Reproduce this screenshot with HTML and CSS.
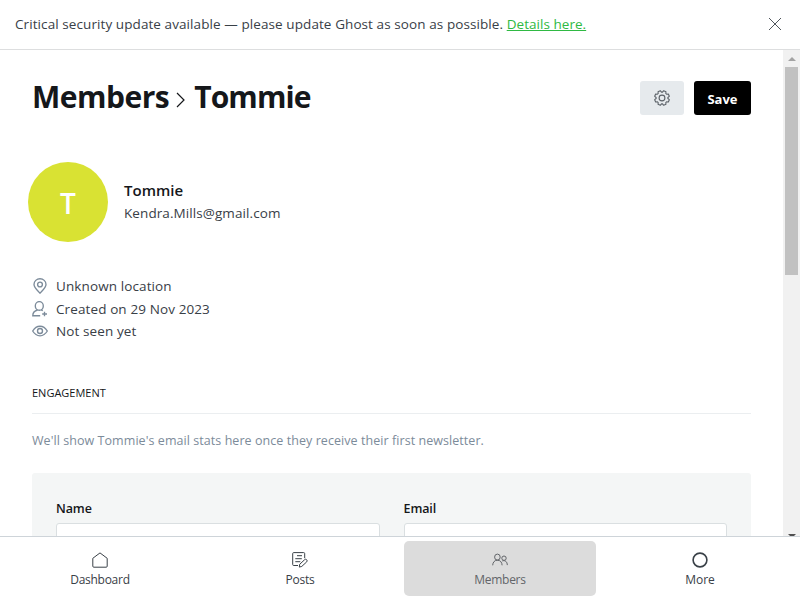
FILE: index.html
```html
<!DOCTYPE html>
<html lang="en">
<head>
<meta charset="utf-8">
<title>Members - Tommie</title>
<link rel="stylesheet" href="styles.css">
</head>
<body>
<div class="app">
  <aside class="banner">
    <p class="banner-text">Critical security update available — please update Ghost as soon as possible. <a href="#">Details here.</a></p>
    <svg class="close" viewBox="0 0 14 14"><path d="M1 1l12 12M13 1L1 13"/></svg>
  </aside>
  <div class="viewport">
    <main class="content">
      <header class="header">
        <h1 class="title"><span class="crumb">Members</span><svg class="chevron" viewBox="0 0 10 16"><path d="M1 1L8 8l-7 7"/></svg><span class="crumb-current">Tommie</span></h1>
        <div class="actions">
          <button class="btn btn-icon" aria-label="Settings">
            <svg class="gear" viewBox="-8 -8 16 16"><circle r="2.900"/><path d="M-.51-5.880L.51-5.880L1.690-7.310L3.970-6.360L3.790-4.520L4.520-3.790L6.360-3.970L7.310-1.690L5.880-.51L5.880.51L7.310 1.690L6.360 3.970L4.520 3.790L3.790 4.520L3.970 6.360L1.690 7.310L.51 5.880L-.51 5.880L-1.690 7.310L-3.970 6.360L-3.790 4.520L-4.520 3.790L-6.360 3.970L-7.310 1.690L-5.880.51L-5.880-.51L-7.310-1.690L-6.360-3.970L-4.520-3.790L-3.790-4.520L-3.970-6.360L-1.690-7.310z"/></svg>
          </button>
          <button class="btn btn-save">Save</button>
        </div>
      </header>
      <section class="profile">
        <div class="avatar">T</div>
        <div class="identity">
          <h3 class="name">Tommie</h3>
          <p class="email">Kendra.Mills@gmail.com</p>
        </div>
      </section>
      <ul class="details">
        <li><svg viewBox="0 0 16 16"><path d="M8 15.200C6.800 13.500 2 9.800 2 6.400a6 5.700 0 0 1 12 0C14 9.800 9.200 13.500 8 15.200z"/><circle cx="8" cy="6.500" r="2.400"/></svg><span class="location">Unknown location</span></li>
        <li><svg viewBox="0 0 16 16"><ellipse cx="7.300" cy="4.900" rx="4" ry="4.300"/><path d="M5.600 9C2.500 9.800.8 11.300.8 14.700h7.400M9.300 9l1.500.6M12.500 10.700v4.600M10.200 13h4.800"/></svg><span class="created">Created on 29 Nov 2023</span></li>
        <li><svg viewBox="0 0 16 16"><path d="M.7 8C2.300 5.300 5 3.200 8 3.200s5.700 2.100 7.300 4.800c-1.600 2.700-4.300 4.800-7.300 4.800S2.300 10.700.7 8z"/><circle cx="8" cy="8" r="2.500"/></svg><span class="seen">Not seen yet</span></li>
      </ul>
      <h4 class="section-title"><span>Engagement</span></h4>
      <p class="hint">We'll show Tommie's email stats here once they receive their first newsletter.</p>
      <form class="form">
        <label class="field"><span class="label-name">Name</span><input type="text"></label>
        <label class="field"><span class="label-email">Email</span><input type="text"></label>
      </form>
    </main>
    <div class="scrollbar">
      <svg class="arrow arrow-up" viewBox="0 0 8 4"><path d="M4 0l4 4H0z"/></svg>
      <div class="thumb"></div>
      <svg class="arrow arrow-down" viewBox="0 0 8 4"><path d="M0 0h8L4 4z"/></svg>
    </div>
  </div>
  <nav class="nav">
    <a class="tab"><svg viewBox="0 0 16 16"><path d="M.8 6.300L8 .9l7.200 5.400v7.900a1 1 0 0 1-1 1H1.800a1 1 0 0 1-1-1z"/></svg><span class="t-dash">Dashboard</span></a>
    <a class="tab"><svg viewBox="0 0 16 16"><path d="M6 13.500H1.700a1 1 0 0 1-1-1V1.600a1 1 0 0 1 1-1h10a1 1 0 0 1 1 1v4.600M5 3.700h5M3.300 6.700h6.500M3.300 9.700h5M7.700 12.300l4.800-4.500a1.500 1.500 0 0 1 2.200 2.100l-4.900 4.500-2.500.7z"/></svg><span class="t-posts">Posts</span></a>
    <a class="tab tab-active"><svg viewBox="0 0 16 16"><ellipse cx="5.400" cy="5.100" rx="2.800" ry="3"/><path d="M.7 13.300c.1-2.800 1.600-5.100 4.700-5.100s4.600 2.300 4.700 5.100M10.300 8.900c3.200-1 4.900 1.100 5 4.200"/><circle cx="12" cy="6.200" r="2.200"/></svg><span class="t-members">Members</span></a>
    <a class="tab tab-more"><svg viewBox="0 0 16 16"><circle cx="8" cy="8" r="6.900"/></svg><span class="t-more">More</span></a>
  </nav>
</div>
</body>
</html>
```
FILE: styles.css
```css
* { box-sizing: border-box; }

body {
  margin: 0;
  font-family: "Open Sans", "Noto Sans", sans-serif;
  color: #15171a;
  background: #fff;
}

h1, h3, h4, p, ul { margin: 0; padding: 0; }
svg { display: block; flex: none; fill: none; stroke: currentColor; }

.app {
  display: flex;
  flex-direction: column;
  width: 800px;
  height: 600px;
  overflow: hidden;
}

.banner {
  display: flex;
  flex: none;
  align-items: center;
  justify-content: space-between;
  height: 50px;
  padding: 0 18px 1px 15px;
  border-bottom: 1px solid #dddedf;
}
.banner-text { font-size: 13.500px; line-height: 20px; letter-spacing: 0.085px; color: #394047; white-space: nowrap; }
.banner-text a { color: #2fb943; letter-spacing: 0.04px; text-decoration: underline; }
.close { width: 14px; height: 14px; color: #50565c; }

.viewport { display: flex; flex: 1; min-height: 0; overflow: hidden; }
.content { width: 783px; padding: 31px 32px 0; }

.header { display: flex; justify-content: space-between; height: 34px; }
.title {
  display: flex;
  align-items: center;
  height: 30px;
  font-size: 30px;
  font-weight: 700;
  white-space: nowrap;
}
.crumb { letter-spacing: -0.500px; }
.crumb-current { letter-spacing: -0.900px; }
.chevron { width: 10px; height: 16px; margin: 7px 8px 0 7px; stroke-width: 1.200; }
.actions { display: flex; gap: 10px; }
.btn {
  display: flex;
  align-items: center;
  justify-content: center;
  height: 34px;
  padding: 0;
  border: 0;
  border-radius: 3px;
  font: 700 13px "Open Sans", sans-serif;
}
.btn-icon { width: 44px; color: #5c6268; background: #e6eaed; }
.btn-save { width: 57px; padding-top: 2px; color: #fff; background: #000; }
.gear { width: 16px; height: 16px; stroke-width: 1.100; stroke-linejoin: round; }

.profile { display: flex; align-items: center; gap: 16px; margin: 47px 0 0 -4px; }
.avatar {
  display: flex;
  align-items: center;
  justify-content: center;
  width: 80px;
  height: 80px;
  padding-top: 1px;
  border-radius: 50%;
  font-size: 28px;
  font-weight: 600;
  color: #fff;
  background: #d9e233;
}
.identity { padding-bottom: 2px; }
.name { font-size: 15px; font-weight: 600; line-height: 23px; }
.email { font-size: 13.500px; line-height: 22px; letter-spacing: 0.085px; color: #394047; }

.details { margin-top: 33px; list-style: none; font-size: 13.500px; letter-spacing: 0.110px; color: #394047; }
.details li { display: flex; align-items: center; gap: 8px; height: 22.500px; }
.details svg { width: 16px; height: 16px; color: #7c8b9a; stroke-width: 1.350; }

.section-title {
  height: 30px;
  margin-top: 41px;
  border-bottom: 1px solid #ebeef0;
  font-size: 11px;
  font-weight: 500;
  line-height: 18px;
  text-transform: uppercase;
}
.hint { margin-top: 17px; font-size: 12.500px; line-height: 20px; letter-spacing: 0.060px; color: #7c8b9a; }
.form {
  display: grid;
  grid-template-columns: 1fr 1fr;
  gap: 24px;
  height: 150px;
  margin-top: 22px;
  padding: 26px 24px;
  border-radius: 3px;
  background: #f4f6f6;
}
.field { display: block; font-size: 12.500px; font-weight: 600; line-height: 20px; letter-spacing: -0.100px; }
.field input {
  display: block;
  width: 100%;
  height: 38px;
  margin-top: 4px;
  border: 1px solid #dadfe1;
  border-radius: 3px;
  background: #fff;
}
.field span { display: block; }

.scrollbar { display: flex; flex-direction: column; align-items: center; width: 17px; background: #f1f1f1; }
.arrow { width: 8px; height: 4px; stroke: none; }
.arrow-up { margin: 7px 0 6px; fill: #a3a3a3; }
.arrow-down { margin-top: auto; margin-bottom: -2px; fill: #505050; }
.thumb { width: 13px; height: 208px; background: #c1c1c1; }

.nav {
  display: grid;
  flex: none;
  grid-template-columns: repeat(4, 1fr);
  gap: 8px;
  height: 64px;
  padding: 4px;
  border-top: 1px solid #ced4d9;
}
.tab {
  display: flex;
  flex-direction: column;
  align-items: center;
  gap: 3px;
  height: 55px;
  padding-top: 11px;
  border-radius: 5px;
  font-size: 12px;
  line-height: 18px;
  letter-spacing: -0.280px;
  color: #394047;
}
.tab svg { width: 16px; height: 16px; margin-left: 0.500px; }
.tab-active { color: #626569; background: #dcdcdc; }
.t-more { letter-spacing: 0; }
.tab-more svg { stroke-width: 1.600; }
```
